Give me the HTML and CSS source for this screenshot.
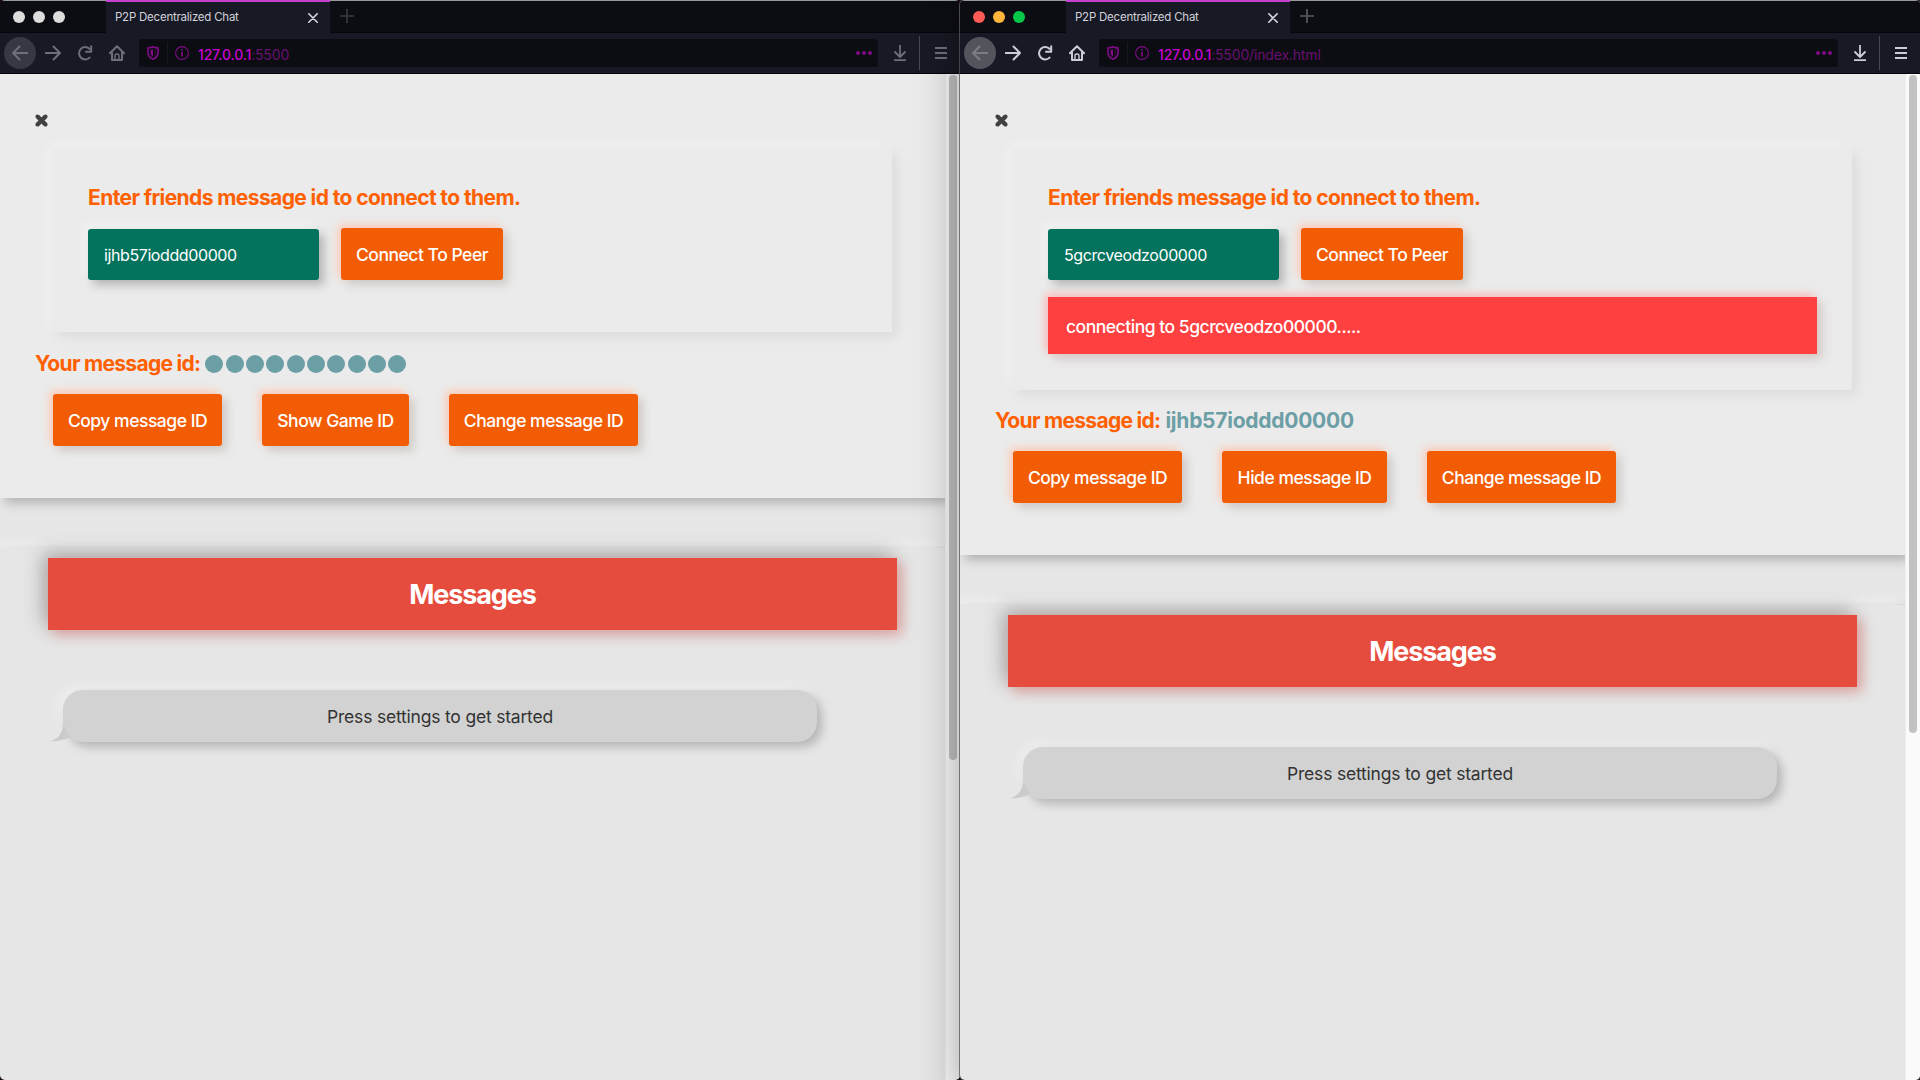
FILE: index.html
```html
<!DOCTYPE html>
<html lang="en">
<head>
<meta charset="utf-8">
<title>P2P Decentralized Chat</title>
<link rel="stylesheet" href="styles.css">
</head>
<body>
<svg class="sprite" aria-hidden="true">
  <symbol id="i-close" viewBox="0 0 10 10"><path d="M.8.8l8.4 8.4M9.2.8L.8 9.200" fill="none" stroke="currentColor" stroke-width="1.6" stroke-linecap="round"/></symbol>
  <symbol id="i-plus" viewBox="0 0 14 14"><path d="M7 0v14M0 7h14" fill="none" stroke="currentColor" stroke-width="1.7"/></symbol>
  <symbol id="i-back" viewBox="0 0 16 16"><path d="M15.300 8H1M7.500 1.500L1 8l6.500 6.500" fill="none" stroke="currentColor" stroke-width="2" stroke-linecap="round" stroke-linejoin="round"/></symbol>
  <symbol id="i-fwd" viewBox="0 0 16 16"><path d="M.7 8H15M8.500 1.500L15 8l-6.500 6.500" fill="none" stroke="currentColor" stroke-width="2" stroke-linecap="round" stroke-linejoin="round"/></symbol>
  <symbol id="i-reload" viewBox="0 0 16 16"><path d="M12.600 12.600A6.200 6.200 0 1 1 12.800 4" fill="none" stroke="currentColor" stroke-width="2" stroke-linecap="round"/><path d="M14.200 1.200v5.600H9" fill="none" stroke="currentColor" stroke-width="2" stroke-linecap="round" stroke-linejoin="round"/></symbol>
  <symbol id="i-home" viewBox="0 0 16 16"><path d="M.9 8.200L8 1.200l7.100 7M3 7.500V15h10V7.500" fill="none" stroke="currentColor" stroke-width="2" stroke-linecap="round" stroke-linejoin="round"/><path d="M6 15v-4.600Q6 9 8 9t2 1.400V15" fill="none" stroke="currentColor" stroke-width="1.400"/></symbol>
  <symbol id="i-shield" viewBox="0 0 12 14"><path d="M6 .9C4.300 1.500 2.700 1.800 1 1.800v4.700C1 9.900 3 12 6 13.200 9 12 11 9.900 11 6.500V1.800C9.300 1.800 7.700 1.500 6 .9z" fill="none" stroke="currentColor" stroke-width="1.700" stroke-linejoin="round"/><path d="M6 3.400v7.200C4.300 9.700 3.500 8.300 3.500 6.400V4z" fill="currentColor"/><path d="M6.500 3.800L8.500 4v2.400c0 1.700-.7 3-2 3.800" fill="none" stroke="currentColor" stroke-width=".6" opacity=".6"/></symbol>
  <symbol id="i-info" viewBox="0 0 14 14"><circle cx="7" cy="7" r="6.400" fill="none" stroke="currentColor" stroke-width="1.100"/><path d="M7 6v4.600M7 3.200v1.600" stroke="currentColor" stroke-width="1.700"/></symbol>
  <symbol id="i-dots" viewBox="0 0 16 4"><circle cx="2" cy="2" r="2" fill="currentColor"/><circle cx="8" cy="2" r="2" fill="currentColor"/><circle cx="14" cy="2" r="2" fill="currentColor"/></symbol>
  <symbol id="i-down" viewBox="0 0 12 16"><path d="M6 .5v11M1 7l5 5 5-5M.5 15.100h11" fill="none" stroke="currentColor" stroke-width="1.800" stroke-linecap="round" stroke-linejoin="round"/></symbol>
  <symbol id="i-menu" viewBox="0 0 12 12"><path d="M0 1h12M0 6h12M0 11h12" stroke="currentColor" stroke-width="1.900"/></symbol>
  <symbol id="i-x" viewBox="0 0 13 13"><path d="M2.500 2.500l8 8M10.500 2.500l-8 8" stroke="currentColor" stroke-width="4" stroke-linecap="round"/><path d="M2.200 2.200l8.600 8.600M10.800 2.200l-8.600 8.600" stroke="currentColor" stroke-width="4"/></symbol>
  <symbol id="i-tail" viewBox="0 0 20 20"><path d="M13 0C13 9 8 15 0 17.300c8 .2 15-1.800 20-4z" fill="currentColor"/></symbol>
</svg>

<div class="desktop">
  <section class="window window-inactive">
    <header class="tabs">
      <div class="lights"><i></i><i></i><i></i></div>
      <div class="tab"><span>P2P Decentralized Chat</span><svg class="tab-close"><use href="#i-close"/></svg></div>
      <svg class="new-tab"><use href="#i-plus"/></svg>
    </header>
    <nav class="toolbar">
      <span class="back"><svg><use href="#i-back"/></svg></span>
      <svg class="nav-icon"><use href="#i-fwd"/></svg>
      <svg class="nav-icon"><use href="#i-reload"/></svg>
      <svg class="nav-icon"><use href="#i-home"/></svg>
      <div class="url">
        <svg class="shield"><use href="#i-shield"/></svg>
        <i class="url-sep"></i>
        <svg class="info"><use href="#i-info"/></svg>
        <span class="address"><b>127.0.0.1</b>:5500</span>
        <svg class="dots"><use href="#i-dots"/></svg>
      </div>
      <svg class="down"><use href="#i-down"/></svg>
      <i class="bar-sep"></i>
      <svg class="menu"><use href="#i-menu"/></svg>
    </nav>
    <div class="view">
      <main class="page">
        <section class="settings">
          <svg class="dismiss"><use href="#i-x"/></svg>
          <div class="connect">
            <h3>Enter friends message id to connect to them.</h3>
            <div class="row"><div class="field">ijhb57ioddd00000</div><button class="w-connect">Connect To Peer</button></div>
          </div>
          <div class="my-id"><span>Your message id:</span><span class="mask"><i></i><i></i><i></i><i></i><i></i><i></i><i></i><i></i><i></i><i></i></span></div>
          <div class="actions"><button class="w-copy">Copy message ID</button><button class="w-show">Show Game ID</button><button class="w-change">Change message ID</button></div>
        </section>
        <section class="messages">
          <h2>Messages</h2>
          <div class="bubble">Press settings to get started<svg class="tail"><use href="#i-tail"/></svg></div>
        </section>
      </main>
      <div class="scroll"><i class="thumb"></i></div>
    </div>
  </section>

  <section class="window window-active">
    <header class="tabs">
      <div class="lights"><i></i><i></i><i></i></div>
      <div class="tab"><span>P2P Decentralized Chat</span><svg class="tab-close"><use href="#i-close"/></svg></div>
      <svg class="new-tab"><use href="#i-plus"/></svg>
    </header>
    <nav class="toolbar">
      <span class="back"><svg><use href="#i-back"/></svg></span>
      <svg class="nav-icon"><use href="#i-fwd"/></svg>
      <svg class="nav-icon"><use href="#i-reload"/></svg>
      <svg class="nav-icon"><use href="#i-home"/></svg>
      <div class="url">
        <svg class="shield"><use href="#i-shield"/></svg>
        <i class="url-sep"></i>
        <svg class="info"><use href="#i-info"/></svg>
        <span class="address"><b>127.0.0.1</b>:5500/index.html</span>
        <svg class="dots"><use href="#i-dots"/></svg>
      </div>
      <svg class="down"><use href="#i-down"/></svg>
      <i class="bar-sep"></i>
      <svg class="menu"><use href="#i-menu"/></svg>
    </nav>
    <div class="view">
      <main class="page">
        <section class="settings">
          <svg class="dismiss"><use href="#i-x"/></svg>
          <div class="connect">
            <h3>Enter friends message id to connect to them.</h3>
            <div class="row"><div class="field">5gcrcveodzo00000</div><button class="w-connect">Connect To Peer</button></div>
            <div class="alert">connecting to 5gcrcveodzo00000.....</div>
          </div>
          <div class="my-id"><span>Your message id:</span><span class="plain-id">ijhb57ioddd00000</span></div>
          <div class="actions"><button class="w-copy">Copy message ID</button><button class="w-hide">Hide message ID</button><button class="w-change">Change message ID</button></div>
        </section>
        <section class="messages">
          <h2>Messages</h2>
          <div class="bubble">Press settings to get started<svg class="tail"><use href="#i-tail"/></svg></div>
        </section>
      </main>
      <div class="scroll"><i class="thumb"></i></div>
    </div>
  </section>
</div>
</body>
</html>
```
FILE: styles.css
```css
* { box-sizing: border-box; margin: 0; padding: 0; }
body { width: 1920px; height: 1080px; overflow: hidden; background: #1a0c10; font-family: Inter, "Liberation Sans", sans-serif; }
svg { display: block; flex: none; }
.sprite { position: absolute; width: 0; height: 0; }
.desktop { display: grid; grid-template-columns: 960px 960px; height: 1080px; }
.window { display: flex; flex-direction: column; height: 1080px; overflow: hidden; border-radius: 5px; min-width: 0; }
.window-active { position: relative; z-index: 1; box-shadow: 0 18px 42px rgba(0, 0, 0, .38), 0 0 0 1px rgba(105, 105, 108, .75); }

/* browser chrome */
.tabs { display: flex; height: 33px; flex: none; background: #0c0d12; border-top: 1px solid #969a9a; border-bottom: 1px solid #05060a; }
.lights { display: flex; gap: 8px; padding: 10px 0 0 13px; width: 106px; }
.lights i { width: 12px; height: 12px; border-radius: 50%; background: #dddddd; }
.window-active .lights i:nth-child(1) { background: #ff5b57; }
.window-active .lights i:nth-child(2) { background: #ffb63b; }
.window-active .lights i:nth-child(3) { background: #05c748; }
.tab { display: flex; align-items: center; justify-content: space-between; width: 224px; height: 33px; margin-top: -1px; padding: 0 12px 0 9px; background: #171924; border-top: 2px solid #c53fd0; color: #d2d2da; font-size: 11.5px; letter-spacing: -.23px; }
.tab span { margin-top: -1px; }
.tab-close { width: 10px; height: 10px; color: #d6d6de; }
.new-tab { width: 14px; height: 14px; margin: 8px 0 0 10px; color: #38393e; }
.window-active .new-tab { color: #5a5b60; }
.toolbar { display: flex; align-items: center; height: 41px; flex: none; padding-left: 4px; background: #171924; border-bottom: 1px solid #030408; color: #6e6f79; }
.window-active .toolbar { color: #cdcdd9; }
.back { display: grid; place-items: center; width: 32px; height: 32px; margin-right: 9px; border-radius: 50%; background: #373841; }
.window-active .back { background: #53545c; color: #7c7d85; }
.back svg, .nav-icon { width: 16px; height: 16px; }
.nav-icon { margin-right: 16px; }
.toolbar .nav-icon:nth-of-type(3) { margin-right: 14px; }
.url { display: flex; align-items: center; width: 739px; height: 28px; padding: 0 6px 0 8px; border-radius: 3px; background: #0c0d12; color: #7e0b86; }
.shield { width: 12px; height: 14px; }
.url-sep { width: 1px; height: 22px; margin: 0 7px 0 8px; background: #17181f; }
.info { width: 14px; height: 14px; margin-right: 9px; }
.address { flex: 1; padding-top: 2px; font-size: 14px; letter-spacing: -.16px; color: #681070; }
.address b { font-weight: 500; color: #c605cf; }
.dots { width: 16px; height: 4px; }
.down { width: 12px; height: 16px; margin-left: 16px; }
.bar-sep { width: 1px; height: 34px; margin: 0 15px 0 13px; background: #474852; }
.menu { width: 12px; height: 12px; }

/* page */
.view { display: flex; flex: 1; background: #e6e6e6; }
.page { width: 945px; overflow: hidden; }
.scroll { width: 15px; padding: 1px 0 0 3px; background: #fafafa; border-left: 1px solid #eeeeee; }
.thumb { display: block; width: 8px; height: 685px; border-radius: 4px; background: #c2c2c2; }
.window-active .thumb { height: 658px; }
.settings { padding: 40px 35px 52px; background: #ebebeb; box-shadow: 5px 5px 10px #b2b2b2, -5px -5px 10px #f0f0f0; }
.dismiss { width: 13px; height: 13px; color: #414141; }
.connect { width: 839px; margin: 22px 0 0 18px; padding: 36px 35px; box-shadow: 5px 5px 10px #dcdcdc, -5px -5px 10px #f0f0f0; }
h3, .my-id { font-size: 21px; font-weight: 650; letter-spacing: -.6px; line-height: 25px; color: #ff6000; }
.row { display: flex; margin: 18px 0 16px; }
.field { width: 231px; height: 51px; margin: 1px 22px 0 0; padding: 1px 16px 0; border-radius: 3px; background: #03735e; color: #fff; font-size: 16px; letter-spacing: -.4px; line-height: 51px; box-shadow: 5px 5px 10px #b4b4b4, -5px -5px 10px #f2f2f2; }
button { height: 52px; border: 0; border-radius: 3px; padding: 1px 0 0; background: #f25c05; color: #fff; font: 500 17.5px Inter, "Liberation Sans", sans-serif; letter-spacing: -.48px; white-space: nowrap; box-shadow: 5px 5px 10px #cfcbc7, -3px -3px 8px #ffc9b3; }
.w-connect { width: 162px; }
.w-copy { width: 169px; }
.w-show { width: 147px; }
.w-hide { width: 165px; }
.w-change { width: 189px; }
.alert { height: 57px; margin-top: 17px; padding-left: 18px; background: #ff4040; color: #fff; font-size: 17.5px; font-weight: 500; letter-spacing: -.48px; line-height: 59px; box-shadow: 5px 5px 10px #d4c8c8, -3px -3px 8px #ffb9b9; }
.my-id { display: flex; align-items: center; gap: 5px; height: 27px; margin-top: 18px; }
.window-active .my-id { margin-top: 17px; }
.my-id span:first-child { letter-spacing: -.7px; }
.mask { display: flex; gap: 2.3px; }
.mask i { width: 18px; height: 18px; border-radius: 50%; background: #6c9ea5; }
.my-id .plain-id { color: #6c9ea5; letter-spacing: -.25px; }
.actions { display: flex; gap: 40px; margin: 17px 0 0 18px; }
.messages { height: 600px; margin-top: 50px; padding: 10px 48px; box-shadow: 5px 5px 10px #b2b2b2, -5px -5px 10px #f0f0f0, 0 -1px #dadada; }
h2 { height: 72px; padding-top: 1px; background: #e64c3d; color: #fff; font-size: 27px; font-weight: 700; letter-spacing: -1.1px; line-height: 71px; text-align: center; box-shadow: 5px 5px 12px #dda5a2, -5px -5px 18px #a6a6a6; }
.bubble { position: relative; width: 754px; height: 52px; margin: 60px 0 0 15px; border-radius: 20px; background: #d2d2d2; color: #333; font-size: 17.5px; letter-spacing: -.2px; line-height: 53px; text-align: center; box-shadow: 5px 5px 10px #b6b6b6, -5px -5px 10px #ededed; }
.tail { position: absolute; left: -13px; bottom: -2px; width: 20px; height: 20px; color: #cbcbcb; }
```
